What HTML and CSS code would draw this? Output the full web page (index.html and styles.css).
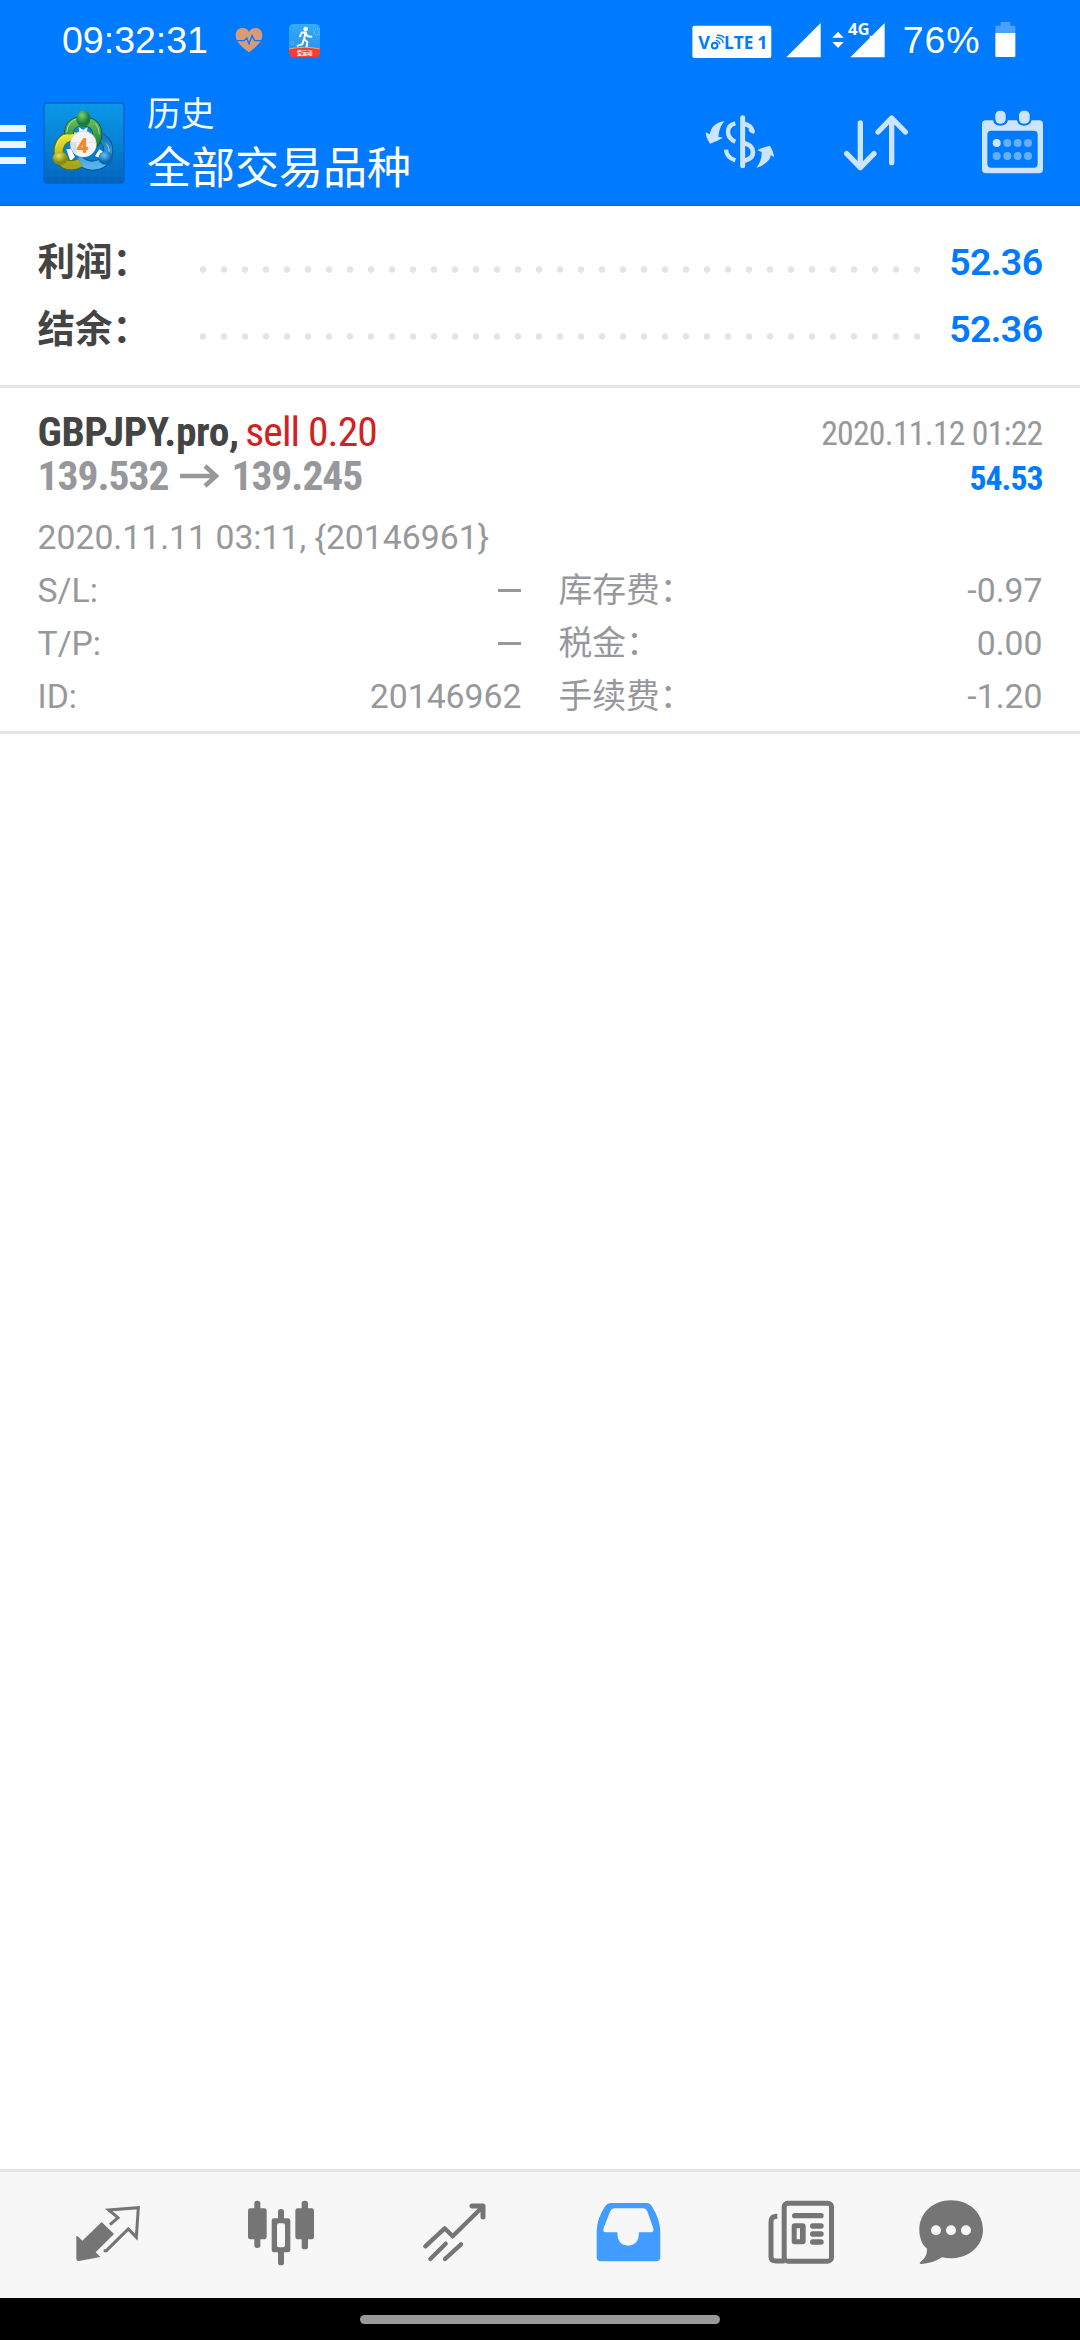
FILE: index.html
```html
<!DOCTYPE html>
<html lang="zh-CN">
<head>
<meta charset="utf-8">
<title>历史</title>
<link rel="stylesheet" href="styles.css">
</head>
<body>
<div class="status">
  <span class="clock">09:32:31</span>
  <svg class="heart" width="28" height="26" viewBox="705 80 84 78"><path d="M747 156 C725 139 707 126 707 105 C707 90 717 83 728 83 C737 83 744 87 747 95 C751 87 758 83 767 83 C778 83 787 91 787 105 C787 126 769 139 747 156Z" fill="#d99a78"/><path d="M705 121H733L740 113L747 130L756 106L764 121H789" fill="none" stroke="#007aff" stroke-width="4"/></svg>
  <svg class="runner" width="31" height="33.3" viewBox="867 72 93 100"><defs><clipPath id="rc"><rect x="867" y="72" width="93" height="100" rx="14"/></clipPath><linearGradient id="rg" x2="0" y2="1"><stop offset="0" stop-color="#31acf8"/><stop offset="1" stop-color="#268df0"/></linearGradient></defs><g clip-path="url(#rc)"><rect x="867" y="72" width="93" height="100" fill="url(#rg)"/><path d="M867 147Q913 137 960 147V172H867Z" fill="#f43e35"/><path d="M867 147Q913 137 960 147" fill="none" stroke="#ff9b75" stroke-width="3"/><circle cx="917" cy="87" r="7" fill="#fff"/><path d="M900 109L905 98L917 97L912 118L922 126L920 139M917 99L923 109L934 110M911 119L907 133L893 137" fill="none" stroke="#fff" stroke-width="6" stroke-linecap="round" stroke-linejoin="round"/><circle cx="951" cy="96" r="9" fill="none" stroke="#88cffb" stroke-width="4" stroke-dasharray="2 4"/><circle cx="877" cy="129" r="5" fill="none" stroke="#64bdf8" stroke-width="2"/><text x="914" y="164" class="runner-text" text-anchor="middle" textLength="46" lengthAdjust="spacingAndGlyphs">爱运动</text></g></svg>
  <svg class="volte" width="80" height="33.3" viewBox="66 74 240 100"><rect x="67" y="76" width="237" height="97" rx="6" fill="#fff"/><text x="85" y="146" class="volte-text" textLength="35">V</text><circle cx="134" cy="136" r="8.5" fill="none" stroke="#007aff" stroke-width="6"/><path d="M137 120Q148 121 150 132M138 112Q156 111 160 128M140 105Q156 103 163 113" fill="none" stroke="#007aff" stroke-width="4"/><text x="162" y="146" class="volte-text" textLength="88" lengthAdjust="spacingAndGlyphs">LTE</text><text x="262" y="146" class="volte-text">1</text></svg>
  <svg class="signal" width="35" height="34.7" viewBox="348 68 105 104"><path d="M349 171L452 68V171Z" fill="#fff"/></svg>
  <svg class="signal4g" width="53" height="34.7" viewBox="486 68 159 104"><path d="M487 112L504 94L521 112ZM487 125L504 143L521 125Z" fill="#fff"/><path d="M541 171L599 113V106H606L644 68V171Z" fill="#fff"/><text x="534" y="104" class="net-text" textLength="65" lengthAdjust="spacingAndGlyphs">4G</text></svg>
  <span class="percent">76%</span>
  <svg class="battery" width="20.7" height="35.3" viewBox="974 66 62 106"><path d="M975 99V81Q975 77 979 77H991V66H1020V77H1031Q1035 77 1035 81V99Z" fill="#4ba1ff"/><path d="M975 99H1035V168Q1035 171 1032 171H978Q975 171 975 168Z" fill="#fff"/></svg>
</div>
<header class="header">
  <div class="menu"><i></i><i></i><i></i></div>
  <svg class="app-icon" width="82" height="82" viewBox="130 306 246 246">
    <defs>
      <linearGradient id="bg" x2="0" y2="1"><stop offset="0" stop-color="#0a98e8"/><stop offset=".5" stop-color="#0681d4"/><stop offset="1" stop-color="#0363bb"/></linearGradient>
      <linearGradient id="gr" x2="0" y2="1"><stop offset="0" stop-color="#66b862"/><stop offset="1" stop-color="#1c8637"/></linearGradient>
      <linearGradient id="ye" x2="0" y2="1"><stop offset="0" stop-color="#ece42f"/><stop offset="1" stop-color="#a5a51c"/></linearGradient>
      <linearGradient id="bl" x2="0" y2="1"><stop offset="0" stop-color="#1578bd"/><stop offset="1" stop-color="#55b4ec"/></linearGradient>
      <radialGradient id="hg" cx=".4" cy=".3"><stop offset="0" stop-color="#7bd376"/><stop offset="1" stop-color="#187d38"/></radialGradient>
      <radialGradient id="hy" cx=".4" cy=".3"><stop offset="0" stop-color="#e5e45b"/><stop offset="1" stop-color="#858c17"/></radialGradient>
      <radialGradient id="hb" cx=".4" cy=".3"><stop offset="0" stop-color="#65c5f4"/><stop offset="1" stop-color="#0a67ae"/></radialGradient>
    </defs>
    <rect x="133" y="309" width="240" height="240" rx="10" fill="url(#bg)" stroke="#0763c4" stroke-width="4"/>
    <path d="M157 311V547M181 311V547M205 311V547M229 311V547M253 311V547M277 311V547M301 311V547M325 311V547M349 311V547M135 333H371M135 357H371M135 381H371M135 405H371M135 429H371M135 453H371M135 477H371M135 501H371M135 525H371" stroke="#31a9ec" stroke-opacity=".16" stroke-width="2"/>
    <path d="M237 381L250 390L264 381L260 404H240ZM200 448L214 446L226 471L212 484ZM286 468L299 448L310 455L304 476Z" fill="#f6fbfd"/>
    <g fill="none">
      <path d="M304 412Q328 428 326 458Q318 496 278 497Q250 496 234 474" stroke="#0754a1" stroke-width="30"/>
      <path d="M304 412Q328 428 326 458Q318 496 278 497Q250 496 234 474" stroke="url(#bl)" stroke-width="24"/>
      <path d="M229 409Q185 407 177 446Q174 479 196 492Q218 501 242 488" stroke="#5a7410" stroke-width="30"/>
      <path d="M229 409Q185 407 177 446Q174 479 196 492Q218 501 242 488" stroke="url(#ye)" stroke-width="24"/>
      <path d="M208 403Q206 366 250 363Q291 367 293 401Q293 421 282 431" stroke="#17642d" stroke-width="30"/>
      <path d="M208 403Q206 366 250 363Q291 367 293 401Q293 421 282 431" stroke="url(#gr)" stroke-width="24"/>
      <path d="M201 397Q205 362 235 355M287 370Q298 381 299 403" stroke="#a5dc93" stroke-width="3"/>
      <path d="M169 441Q178 410 205 403M319 430Q333 445 326 468" stroke="#e8f5a2" stroke-opacity=".6" stroke-width="3"/>
    </g>
    <ellipse cx="251" cy="356" rx="21" ry="25" fill="url(#hg)"/>
    <ellipse cx="182" cy="475" rx="23" ry="20" fill="url(#hy)"/>
    <ellipse cx="318" cy="474" rx="22" ry="20" fill="url(#hb)"/>
    <circle cx="251" cy="432" r="39" fill="#f3f3f4" stroke="#c5ccd2" stroke-width="2"/>
    <path d="M213 427H289A38 38 0 0 1 213 427Z" fill="#dcdee2"/>
    <path d="M231 428H289A38 38 0 0 1 231 464Z" fill="#f7f7f7"/>
    <text x="249" y="455" class="four" text-anchor="middle">4</text>
  </svg>
  <div class="titles"><div class="title-sm">历史</div><div class="title-lg">全部交易品种</div></div>
  <svg class="act-currency" width="70" height="70" viewBox="105 320 210 210"><g fill="none" stroke="#cce4ff"><path d="M218 352V496" stroke-width="15" stroke-linecap="round"/><path d="M196 369Q174 374 174 394Q174 414 196 424M168 448Q170 472 196 480M224 371Q242 374 248 392" stroke-width="13"/><path d="M242 389L249 394" stroke-width="12" stroke-linecap="round"/><path d="M224 429Q249 436 249 456Q249 475 224 481" stroke-width="14"/></g><path d="M163 363Q142 365 128 380Q121 389 119 402L107 396Q108 414 120 430Q137 425 159 412L145 409Q147 382 163 363ZM259 502Q281 497 296 480Q302 473 302 464L313 471Q310 451 300 436Q282 439 262 450L275 455Q276 481 259 502Z" fill="#cce4ff"/></svg>
  <svg class="act-sort" width="66" height="70" viewBox="519 320 198 210"><path d="M571 368V500M530 460L571 502L612 460M665 487V354M624 395L665 353L706 395" fill="none" stroke="#cce4ff" stroke-width="16" stroke-linecap="round" stroke-linejoin="round"/></svg>
  <svg class="act-cal" width="63" height="70" viewBox="933 320 189 210"><path fill-rule="evenodd" d="M948 360H969Q972 376 991 376Q1010 376 1014 360H1041Q1044 376 1062 376Q1081 376 1085 360H1107Q1119 360 1119 372V507Q1119 519 1107 519H948Q936 519 936 507V372Q936 360 948 360ZM964 391Q952 391 952 403V490Q952 502 964 502H1091Q1103 502 1103 490V403Q1103 391 1091 391Z" fill="#cce4ff"/><rect x="976" y="331" width="31" height="39" rx="14" fill="#cce4ff"/><rect x="1047" y="331" width="32" height="39" rx="14" fill="#cce4ff"/><circle cx="980" cy="428" r="12" fill="#cce4ff"/><g fill="#66afff"><circle cx="1012" cy="428" r="12"/><circle cx="1043" cy="428" r="12"/><circle cx="1074" cy="428" r="12"/><circle cx="980" cy="467" r="12"/><circle cx="1012" cy="467" r="12"/><circle cx="1043" cy="467" r="12"/><circle cx="1074" cy="467" r="12"/></g></svg>
</header>
<main class="content">
  <section class="summary">
    <div class="sum-row"><span class="sum-label">利润：</span><span class="dots"></span><span class="sum-value">52.36</span></div>
    <div class="sum-row"><span class="sum-label">结余：</span><span class="dots"></span><span class="sum-value">52.36</span></div>
  </section>
  <section class="deal">
    <div class="deal-row"><span class="symbol"><b>GBPJPY.pro,</b> <span class="sell">sell 0.20</span></span><span class="close-time">2020.11.12 01:22</span></div>
    <div class="deal-row"><span class="prices"><span>139.532</span><svg width="39" height="24" viewBox="0 0 39 24"><path d="M0 12H35M25 2L36 12L25 22" fill="none" stroke="#97989b" stroke-width="4.5"/></svg><span>139.245</span></span><span class="profit">54.53</span></div>
    <div class="open">2020.11.11 03:11, {20146961}</div>
    <div class="details">
      <div class="cell"><span>S/L:</span><i class="dash"></i></div><div class="cell"><span>库存费：</span><span>-0.97</span></div>
      <div class="cell"><span>T/P:</span><i class="dash"></i></div><div class="cell"><span>税金：</span><span>0.00</span></div>
      <div class="cell"><span>ID:</span><span>20146962</span></div><div class="cell"><span>手续费：</span><span>-1.20</span></div>
    </div>
  </section>
</main>
<nav class="tabs">
  <svg width="66" height="70" viewBox="104 110 198 210"><path d="M184 185L221 221L166 276L180 290L116 302Q108 303 108 295V228Q110 226 114 229L126 241Z" fill="#757575"/><path d="M209 193L233 172L205 149L294 142L288 231L264 206L198 271H190" fill="none" stroke="#757575" stroke-width="9"/></svg>
  <svg width="68.7" height="70" viewBox="618 110 206 210"><g fill="#757575"><rect x="640" y="121" width="18" height="142" rx="8"/><rect x="621" y="144" width="56" height="93" rx="7"/><rect x="782" y="121" width="19" height="146" rx="8"/><rect x="763" y="144" width="56" height="93" rx="7"/><rect x="711" y="146" width="18" height="169" rx="8"/><rect x="692" y="174" width="56" height="102" rx="7"/></g><rect x="708" y="189" width="24" height="72" rx="6" fill="#f7f7f7"/></svg>
  <svg width="66" height="70" viewBox="1142 110 198 210"><g fill="none" stroke="#757575" stroke-width="13" stroke-linejoin="round" stroke-linecap="round"><path d="M1152 258L1210 204L1234 228L1321 142"/><path d="M1167 296L1213 250M1211 296L1259 252"/></g><path d="M1292 137H1325V170" fill="none" stroke="#757575" stroke-width="15" stroke-linecap="round" stroke-linejoin="round"/><path d="M1300 135H1327V165Z" fill="#757575"/></svg>
  <svg width="65.3" height="70" viewBox="104 110 196 210"><path fill-rule="evenodd" d="M148 128H257Q266 128 271 136Q297 178 297 215V290Q297 303 284 303H119Q106 303 106 290V215Q106 175 132 137Q138 128 148 128ZM159 144Q150 144 147 152L127 203Q123 216 134 216H168Q168 256 201 256Q233 255 233 216H268Q279 216 276 204L258 153Q254 144 245 144Z" fill="#439cff"/></svg>
  <svg width="68.7" height="70" viewBox="622 110 206 210"><path d="M646 168H653M652 168Q634 168 634 184V290Q634 302 649 302H675" fill="none" stroke="#757575" stroke-width="15"/><rect x="673.5" y="128.500" width="142" height="174" rx="11" fill="none" stroke="#757575" stroke-width="15"/><g fill="#757575"><rect x="697" y="158" width="95" height="16" rx="8"/><path fill-rule="evenodd" d="M705 189H729Q738 189 738 198V243Q738 252 729 252H705Q696 252 696 243V198Q696 189 705 189ZM711 204V237H721V204Z"/><rect x="751" y="189" width="41" height="16" rx="8"/><rect x="751" y="213" width="41" height="16" rx="8"/><rect x="751" y="237" width="41" height="16" rx="8"/></g></svg>
  <svg width="66" height="70" viewBox="1074 110 198 210"><path d="M1173 120C1228 120 1269 158 1269 208C1269 265 1211 305 1146 291Q1117 310 1084 311Q1075 310 1082 304Q1102 290 1101 265C1086 253 1078 231 1078 208C1078 158 1119 120 1173 120Z" fill="#757575"/><g fill="#f7f7f7"><circle cx="1128" cy="210" r="15"/><circle cx="1173" cy="210" r="15"/><circle cx="1218" cy="210" r="15"/></g></svg>
</nav>
<div class="gesture"><i></i></div>
</body>
</html>
```
FILE: styles.css
```css
* { box-sizing: border-box; }
body {
  margin: 0;
  width: 1080px;
  height: 2340px;
  display: flex;
  flex-direction: column;
  background: #fff;
  font-family: Roboto, "Noto Sans CJK SC", sans-serif;
  overflow: hidden;
}
svg { display: block; flex: none; overflow: visible; }
span { white-space: nowrap; }

.status {
  height: 80px;
  flex: none;
  display: flex;
  align-items: flex-start;
  padding: 0 64.7px 0 62px;
  background: #007aff;
  color: #fff;
  font: 37.5px/80px "Liberation Sans", sans-serif;
}
.clock { width: 173px; }
.heart { margin-top: 27px; }
.runner { margin: 24px 0 0 26px; }
.runner-text { font: bold 16px "Noto Sans CJK SC", sans-serif; fill: #fff; }
.volte { margin: 24.7px 14px 0 auto; }
.volte-text { font: bold 54px "Open Sans", sans-serif; fill: #007aff; }
.signal { margin: 22.7px 11px 0 0; }
.signal4g { margin: 22.7px 17.7px 0 0; }
.net-text { font: bold 46px "Open Sans", sans-serif; fill: #fff; }
.percent { width: 92px; letter-spacing: 1px; }
.battery { margin-top: 22px; }

.header {
  height: 126px;
  flex: none;
  display: flex;
  align-items: flex-start;
  padding-right: 36px;
  background: #007aff;
  border-bottom: 2px solid #0071e8;
  color: #fff;
}
.menu { width: 26px; margin: 45px 17px 0 0; display: grid; gap: 9px; }
.menu i { height: 7px; background: #ebf5ff; }
.app-icon { margin-top: 22px; }
.four { font: 54px Roboto, sans-serif; fill: #fbe0bd; stroke: #f08a2c; stroke-width: 5px; }
.titles { margin-left: 22px; flex: 1; font-family: "Noto Sans CJK SC", sans-serif; }
.title-sm { margin-top: 8px; font-size: 33.75px; line-height: 48px; color: #f4f9ff; }
.title-lg { font-size: 44px; line-height: 58px; }
.act-currency { margin: 26.7px 68px 0 0; }
.act-sort { margin: 26.7px 72px 0 0; }
.act-cal { margin-top: 26.7px; }

.content { flex: 1; }
.summary { height: 182px; padding: 23px 37.5px 0; border-bottom: 3px solid #e5e5e5; }
.sum-row { display: flex; height: 67px; line-height: 66px; font-size: 37.5px; font-weight: 700; }
.sum-label { width: 155.2px; color: #444; }
.dots {
  width: 735px;
  height: 21px;
  margin-top: 30px;
  background: radial-gradient(circle at 10px 10.5px, #e4e4e4 2.9px, transparent 3.7px) 0 0 / 21px 21px;
}
.sum-value { flex: 1; text-align: right; color: #007aff; font-weight: 650; letter-spacing: -.6px; }

.deal { height: 346px; padding: 20px 37.5px 0; border-bottom: 3px solid #e5e5e5; color: #97989b; font-size: 33.75px; }
.deal-row { display: flex; justify-content: space-between; height: 45px; line-height: 48px; font-stretch: 75%; }
.symbol { font-size: 41.5px; color: #444; }
.symbol b { letter-spacing: -.4px; }
.sell { color: #d32020; letter-spacing: -.85px; margin-left: -3px; }
.prices { display: flex; align-items: center; gap: 12px; font-size: 41.5px; font-weight: 700; letter-spacing: -1px; }
.close-time, .profit { line-height: 52px; }
.close-time { letter-spacing: -.75px; }
.profit { font-weight: 700; color: #007aff; letter-spacing: -1px; }
.open { height: 53px; margin-top: 13px; line-height: 53px; }
.details { display: grid; grid-template-columns: 484px 484px; column-gap: 37px; }
.cell { height: 53px; line-height: 53px; display: flex; justify-content: space-between; align-items: center; }
.dash { width: 23px; height: 3px; margin-right: 1px; background: #97989b; }

.tabs {
  height: 129px;
  flex: none;
  display: grid;
  grid-template-columns: repeat(5, 173.5px) 125px;
  justify-items: center;
  padding: 24.7px 0 0 21px;
  border-top: 3px solid #e5e5e5;
  background: #f7f7f7;
}
.gesture { height: 42px; flex: none; display: flex; justify-content: center; padding-top: 17px; background: #000; }
.gesture i { width: 360px; height: 9px; border-radius: 5px; background: #999; }
```
